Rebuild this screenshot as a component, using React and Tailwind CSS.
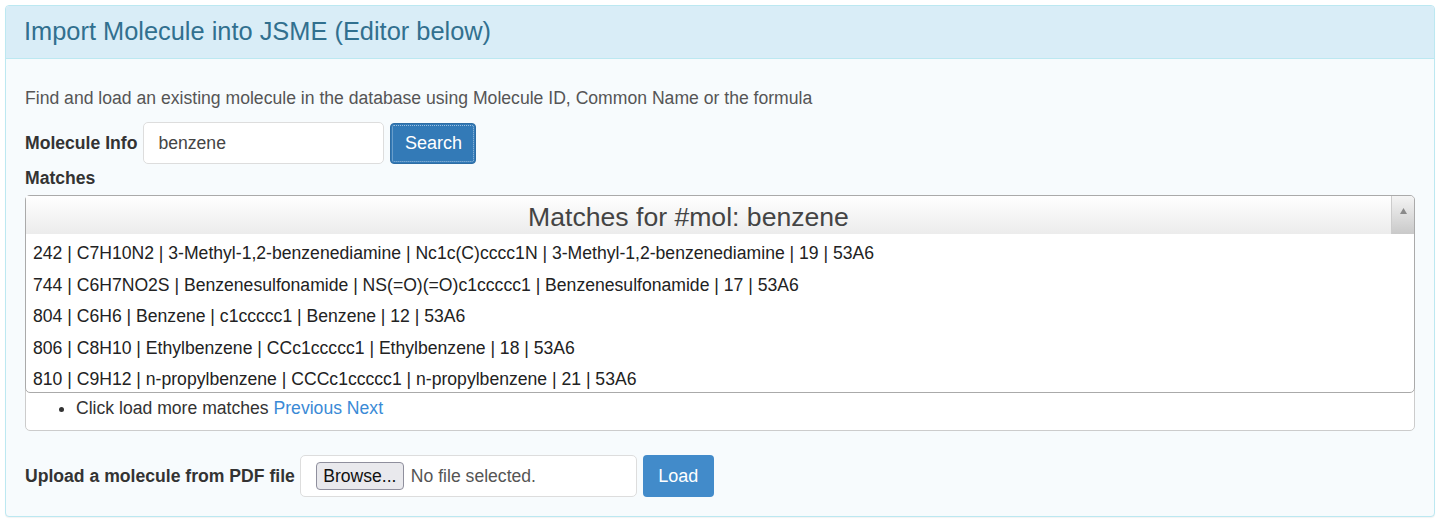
import { useState } from "react";

const matches = [
  "242 | C7H10N2 | 3-Methyl-1,2-benzenediamine | Nc1c(C)cccc1N | 3-Methyl-1,2-benzenediamine | 19 | 53A6",
  "744 | C6H7NO2S | Benzenesulfonamide | NS(=O)(=O)c1ccccc1 | Benzenesulfonamide | 17 | 53A6",
  "804 | C6H6 | Benzene | c1ccccc1 | Benzene | 12 | 53A6",
  "806 | C8H10 | Ethylbenzene | CCc1ccccc1 | Ethylbenzene | 18 | 53A6",
  "810 | C9H12 | n-propylbenzene | CCCc1ccccc1 | n-propylbenzene | 21 | 53A6",
];

export default function App() {
  const [query, setQuery] = useState("benzene");

  return (
    <div className="min-h-screen bg-white p-[5px] font-['Liberation_Sans',Arial,sans-serif] text-[#333]">
      <div className="overflow-hidden rounded-[4px] border border-[#bce8f1] bg-[#f7fbfd] shadow-[0_1px_1px_rgba(0,0,0,0.05)]">
        {/* panel heading */}
        <div className="flex h-[53px] items-center border-b border-[#bce8f1] bg-[#d9edf7] px-[18px]">
          <h3 className="text-[25.4px] leading-none text-[#31708f]">
            Import Molecule into JSME (Editor below)
          </h3>
        </div>

        <div className="px-[19px] pb-[19px] pt-[28px]">
          <p className="text-[17.6px] leading-[22px] text-[#555]">
            Find and load an existing molecule in the database using Molecule ID, Common Name or the formula
          </p>

          <div className="mt-[13px] flex items-center">
            <label className="mr-[6px] text-[17.6px] font-bold leading-[22px] text-[#333]">Molecule Info</label>
            <input
              value={query}
              onChange={(e) => setQuery(e.target.value)}
              className="h-[42px] w-[241px] rounded-[5px] border border-[#ddd] bg-white px-[14px] text-[17.6px] text-[#444] outline-none"
            />
            <button className="ml-[6px] h-[41px] w-[86px] rounded-[4px] border border-[#2e6da4] bg-[#337ab7] text-[18px] text-white outline-1 outline-dotted outline-offset-[-3px] outline-[#9fc0de]">
              Search
            </button>
          </div>

          <div className="mt-[3px] text-[17.6px] font-bold leading-[22px]">Matches</div>

          <div className="mt-[6px] rounded-[5px] border border-[#ccc] bg-white">
            <div className="mx-[-1px] mt-[-1px] rounded-[5px] border border-[#aaa] bg-white">
              <div className="flex h-[38px]">
                <div className="flex flex-1 items-center justify-center bg-gradient-to-b from-white to-[#ececec] pr-[40px] pt-[5px] text-[26.6px] text-[#444]">
                  Matches for #mol: benzene
                </div>
                <div className="flex w-[23px] items-start justify-center rounded-tr-[4px] border-l border-[#ccc] bg-gradient-to-b from-[#f4f4f4] to-[#c9c9c9] pt-[12px]">
                  <svg width="7" height="6" viewBox="0 0 7 6">
                    <path d="M3.5 0 L7 6 L0 6 Z" fill="#8a8a8a" />
                  </svg>
                </div>
              </div>
              <ul className="h-[158px] overflow-hidden pr-[23px] pt-[2px]">
                {matches.map((m) => (
                  <li key={m} className="h-[31.5px] truncate px-[7px] pt-[6px] text-[17.6px] leading-[22px] text-[#222]">
                    {m}
                  </li>
                ))}
              </ul>
            </div>
            <ul className="list-disc pb-[11px] pl-[50px] pt-[4px] text-[17.6px] leading-[22px] text-[#333]">
              <li>
                Click load more matches{" "}
                <a href="#" className="text-[#3a8ad6]">Previous</a>{" "}
                <a href="#" className="text-[#3a8ad6]">Next</a>
              </li>
            </ul>
          </div>

          <div className="mt-[24px] flex items-center">
            <label className="mr-[5px] text-[17.6px] font-bold leading-[22px] text-[#333]">
              Upload a molecule from PDF file
            </label>
            <div className="flex h-[42px] w-[337px] items-center rounded-[5px] border border-[#ddd] bg-white pl-[15px]">
              <button className="h-[28px] w-[88px] rounded-[4px] border border-[#8f8f9d] bg-[#e9e9ed] text-[17.6px] text-[#111]">
                Browse...
              </button>
              <span className="ml-[7px] text-[17.6px] text-[#555]">No file selected.</span>
            </div>
            <button className="ml-[6px] h-[42px] w-[71px] rounded-[4px] bg-[#428bca] text-[18px] text-white">
              Load
            </button>
          </div>
        </div>
      </div>
    </div>
  );
}
